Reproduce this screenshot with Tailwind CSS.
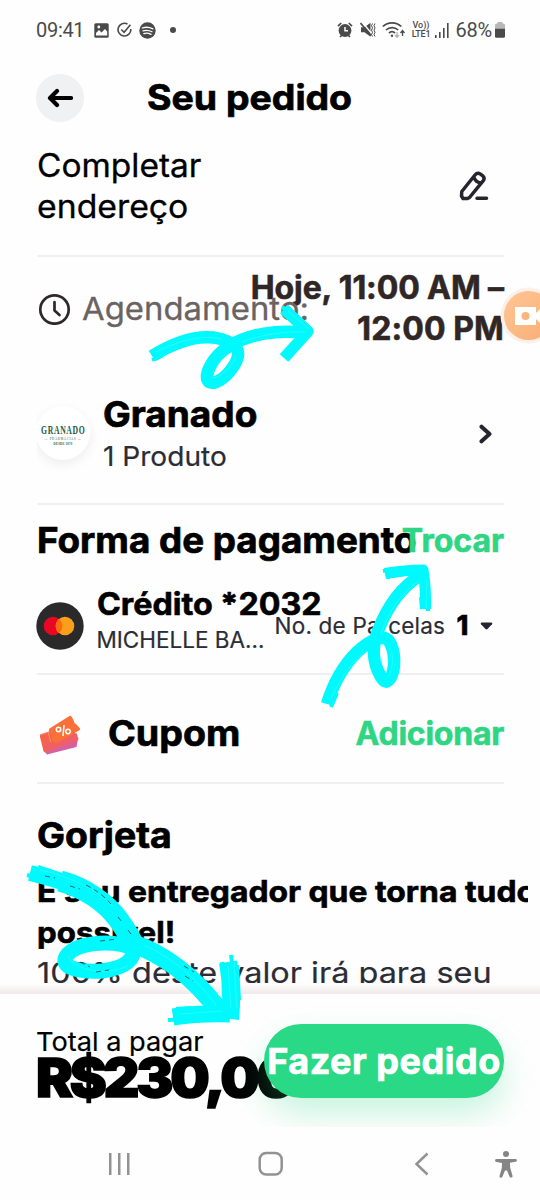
<!DOCTYPE html>
<html lang="pt-BR">
<head>
<meta charset="utf-8">
<title>Seu pedido</title>
<script src="https://cdn.jsdelivr.net/npm/@tailwindcss/browser@4"></script>
</head>
<body class="bg-white">
<div class="relative flex h-[1200px] w-[540px] flex-col overflow-hidden bg-[#fefefe] font-['Inter',sans-serif] whitespace-nowrap text-black">

  <!-- Status bar -->
  <div class="flex h-[60px] shrink-0 items-center justify-between pr-[35px] pl-[36px] font-['Roboto',sans-serif] text-[20px] text-[#4a4a4a]">
    <div class="flex items-center">
      <span class="w-[58px] tracking-[-0.3px]">09:41</span>
      <svg class="mr-[8px] h-[15px] w-[15px]" viewBox="0 0 15 15"><rect x=".3" y=".3" width="14.4" height="14.4" rx="1.5" fill="#4a4a4a"/><path d="M2 12.5V10l3-3 2.5 2.5L11 6l2.2 2.4v4.1z" fill="#fff"/><circle cx="4.8" cy="4" r="1.4" fill="#fff"/></svg>
      <svg class="mr-[7px] h-[16px] w-[15px]" viewBox="0 0 15 16" fill="none" stroke="#4a4a4a" stroke-width="1.6"><path d="M10.5 2A6.4 6.4 0 1 0 13.8 7M4.3 7.5l2.8 2.8L13.4 2.8"/></svg>
      <svg class="h-[17px] w-[17px]" viewBox="0 0 17 17"><circle cx="8.5" cy="8.5" r="8.2" fill="#4a4a4a"/><path d="M3.3 6c3.4-1.2 7.200-.8 10.600.8M4 8.900c3-1 6-.7 9 .9M4.800 11.600c2.500-.8 4.800-.5 7.200.8" fill="none" stroke="#fff" stroke-width="1.300" stroke-linecap="round"/></svg>
      <span class="ml-[14px] h-[6px] w-[6px] rounded-full bg-[#4a4a4a]"></span>
    </div>
    <div class="flex items-center">
      <svg class="mr-[7px] h-[16px] w-[16px]" viewBox="0 0 16 16"><path d="M1 4.200 4.200 1M15 4.200 11.800 1M3 15l2-2M13 15l-2-2" stroke="#4a4a4a" stroke-width="1.700"/><circle cx="8" cy="8.500" r="6.400" fill="#4a4a4a"/><path d="M8 5v3.800h3" fill="none" stroke="#fff" stroke-width="1.500"/></svg>
      <svg class="mr-[6px] h-[16px] w-[16px]" viewBox="0 0 16 16"><path d="M1 5.300h3.500L10.500.800v14L4.500 10.300H1z" fill="#4a4a4a"/><path d="M2 0 13 13" stroke="#fff" stroke-width="1.400"/><path d="M.500 1 11 13.500" stroke="#4a4a4a" stroke-width="1.600"/><path d="M12.500 1.500l-1 2.200 1 2.200-1 2.200 1 2.200-1 2.200 1 2M15 1.500l-1 2.200 1 2.200-1 2.200 1 2.200-1 2.200 1 2" fill="none" stroke="#4a4a4a" stroke-width="1"/></svg>
      <svg class="mr-[6px] h-[18px] w-[23px]" viewBox="0 0 23 18"><g fill="none" stroke="#4a4a4a" stroke-width="1.700"><path d="M.800 5.500a13.500 13.500 0 0 1 18.500 0M4 9a8.800 8.800 0 0 1 12.200 0M7 12a4.500 4.500 0 0 1 6 0"/></g><circle cx="10" cy="14.700" r="1.200" fill="#4a4a4a"/><path d="M20.500 15V10M18.500 12l2-2.500 2 2.500" stroke="#4a4a4a" stroke-width="1.300" fill="none"/><path d="M15 11v5M13 14l2 2.300 2-2.300" stroke="#b0b0b0" stroke-width="1.300" fill="none"/></svg>
      <span class="mr-[4px] flex w-[20px] flex-col items-center text-[9px] leading-[9px] font-medium"><span>Vo))</span><span class="tracking-[-0.2px]">LTE1</span></span>
      <svg class="mr-[8px] h-[15px] w-[14px]" viewBox="0 0 14 15" fill="#4a4a4a"><path d="M0 12h1.600v3H0zM4 9h1.600v6H4zM8 5h1.600v10H8zM12 0h1.600v15H12z"/></svg>
      <span class="-ml-[1.500px] w-[39.500px] tracking-[-0.300px]">68%</span>
      <svg class="h-[16px] w-[10px]" viewBox="0 0 10 16"><path d="M2.500 0h5v1.500H8.500q1.500 0 1.500 1.500v4H0V3q0-1.500 1.500-1.500h1z" fill="#b8b8b8"/><path d="M0 6.700h10v7.500q0 1.500-1.500 1.500h-7Q0 15.700 0 14.200z" fill="#4a4a4a"/></svg>
    </div>
  </div>

  <!-- Header -->
  <header class="flex h-[75px] shrink-0 items-center pl-[36px]">
    <div class="flex h-[48px] w-[48px] items-center justify-center rounded-full bg-[#f0f1f3]">
      <svg class="h-[20px] w-[26px]" viewBox="0 0 26 20" fill="none" stroke="#000" stroke-width="4.200" stroke-linecap="round" stroke-linejoin="round"><path d="M24 10H4M10 3 3 10l7 7"/></svg>
    </div>
    <h1 class="mb-[2px] ml-[62.500px] origin-left scale-x-[1.069] text-[35px] leading-[42px] font-bold [-webkit-text-stroke:0.7px]">Seu pedido</h1>
  </header>

  <!-- Scrolling order details -->
  <main class="flex h-[848px] shrink-0 flex-col overflow-hidden">
    <section class="mr-[36px] ml-[37px] flex h-[122px] shrink-0 justify-between border-b-2 border-[#f0f0f0] pt-[10px]">
      <p class="text-[32px] leading-[41px] [-webkit-text-stroke:0.3px]"><span class="block origin-left scale-x-[1.046]">Completar</span><span class="block origin-left scale-x-[1.055]">endereço</span></p>
      <svg class="mt-[25px] mr-[15px] h-[32px] w-[30px]" viewBox="0 0 30 32" fill="none" stroke="#26252f" stroke-width="3.500" stroke-linecap="round" stroke-linejoin="round"><path d="M2.800 21.500 16 5q2.500-3 5.500-.800l2 1.500q2.800 2.300.600 5.200L10.500 27.500 8.500 28.500H4L2.500 26zM15 7.500q1.500 4.500 6.500 5.500M18 28.200h9.500"/></svg>
    </section>

    <section class="mr-[36px] ml-[38px] grid h-[98px] shrink-0 pt-[10px]">
      <div class="col-start-1 row-start-1 flex h-[83px] items-center">
        <svg class="h-[33px] w-[33px]" viewBox="0 0 33 33" fill="none" stroke="#2f2829" stroke-width="2.700" stroke-linecap="round" stroke-linejoin="round"><circle cx="16.500" cy="17.500" r="14.200"/><path d="M16.500 10v8.500l5 4.500"/></svg>
        <span class="ml-[10.500px] origin-left scale-x-[1.043] text-[31.500px] leading-[41px] text-[#6b6362] [-webkit-text-stroke:0.3px]">Agendamento:</span>
      </div>
      <p class="col-start-1 row-start-1 h-[82px] text-right text-[32px] leading-[41px] font-bold text-[#2f2625] [-webkit-text-stroke:0.6px]"><span class="block tracking-[-0.100px]">Hoje, 11:00 AM –</span><span class="block tracking-[0.100px]">12:00 PM</span></p>
    </section>

    <section class="mr-[36px] ml-[37px] flex h-[150px] shrink-0 border-b-2 border-[#f0f0f0] pt-[39px]">
      <div class="flex h-[90px] w-[66px] overflow-hidden pt-[12px]">
        <div class="-ml-[1px] flex h-[54px] w-[54px] shrink-0 flex-col items-center rounded-full bg-white pt-[18px] font-['Liberation_Serif',serif] text-[#1d5a43] shadow-[0_4px_12px_rgba(0,0,0,0.07)]">
          <svg class="h-[12px] w-[46px]" viewBox="0 0 46 12"><text x="1" y="10" font-family="Liberation Serif" font-weight="700" font-size="11.500" letter-spacing="1" textLength="44.500" lengthAdjust="spacingAndGlyphs" fill="#1d5a43">GRANADO</text></svg>
          <span class="mt-[1px] text-[3px] leading-[5px] tracking-[0.700px]">— PHARMÁCIAS —</span>
          <span class="text-[3px] leading-[5px] font-bold tracking-[0.200px]">DESDE 1870</span>
        </div>
      </div>
      <div class="flex-1">
        <h2 class="origin-left scale-x-[1.028] text-[36px] leading-[41px] font-bold [-webkit-text-stroke:0.7px]">Granado</h2>
        <p class="origin-left scale-x-[1.040] text-[27px] leading-[43px] text-[#2c2c35] [-webkit-text-stroke:0.2px]">1 Produto</p>
      </div>
      <svg class="mt-[30px] mr-[11px] h-[20px] w-[15px]" viewBox="0 0 15 20" fill="none" stroke="#26252f" stroke-width="4" stroke-linecap="round" stroke-linejoin="round"><path d="M3.500 2.700 11.500 10l-8 7.300"/></svg>
    </section>

    <section class="mr-[36px] ml-[36.500px] flex h-[170px] shrink-0 flex-col border-b-2 border-[#f0f0f0] pt-[15px]">
      <div class="grid h-[41px]">
        <h2 class="col-start-1 row-start-1 origin-left scale-x-[1.022] justify-self-start text-[36px] leading-[41px] font-bold [-webkit-text-stroke:0.7px]">Forma de pagamento</h2>
        <span class="z-10 col-start-1 row-start-1 justify-self-end text-[32px] leading-[42px] font-bold text-[#2ed583] [-webkit-text-stroke:0.6px]">Trocar</span>
      </div>
      <div class="mt-[23px] grid">
        <div class="col-start-1 row-start-1 flex">
          <svg class="mt-[18px] -ml-[.5px] h-[48px] w-[48px]" viewBox="0 0 48 48"><circle cx="24" cy="24" r="23.700" fill="#2a2a2b"/><circle cx="17" cy="24" r="9.300" fill="#ea0721"/><circle cx="29" cy="24" r="9.300" fill="#f99f1b"/><path d="M23 16.900a9.300 9.300 0 0 1 0 14.200 9.300 9.300 0 0 1 0-14.200z" fill="#fb6b0d"/></svg>
          <div class="ml-[12.500px]">
            <p class="origin-left scale-x-[1.040] text-[31px] leading-[40px] font-bold [-webkit-text-stroke:0.6px]">Crédito *2032</p>
            <p class="text-[22.500px] leading-[32px] text-[#2c2c35] [-webkit-text-stroke:0.2px]">MICHELLE BA…</p>
          </div>
        </div>
        <div class="col-start-1 row-start-1 mt-[22px] mr-[11.500px] flex h-[40px] items-center justify-self-end">
          <span class="text-[22.500px] tracking-[0.200px] text-[#2c2c35] [-webkit-text-stroke:0.2px]">No. de Parcelas</span>
          <span class="ml-[11.500px] text-[27px] font-extrabold [-webkit-text-stroke:0.5px]">1</span>
          <svg class="ml-[11px] h-[8px] w-[13px]" viewBox="0 0 13 8"><path d="M1.500.500h10q1.500.500.500 1.700L7.500 7q-1 .800-2 0L1 2.200Q0 1 1.500.500z" fill="#26252f"/></svg>
        </div>
      </div>
    </section>

    <section class="mr-[36px] ml-[37px] flex h-[109px] shrink-0 items-center border-b-2 border-[#f0f0f0] pt-[9px]">
      <svg class="mt-[4px] h-[42px] w-[44px]" viewBox="0 0 44 42"><path d="m6 36 35-11-1.500 8L10 40.500z" fill="#d9609f"/><path d="M3 20.500 32 11l4 5 5.500 9.500L8.500 38q-1.500.500-2-1L5 31l-2-8z" fill="#f4644b"/><path d="m11 18 4.500 16M3 21l9-3" stroke="#ff8a72" stroke-width="1"/><path d="m6.500 31 33-12 2 6L9 37z" fill="#ef5f63"/><path d="M12.500 14.500 32.500 2q1.300-.700 2 .500l2 3.500 1 3 2 1.500 3.500 4q.500 1.500-1 2L20 29q-2 .800-3-.500L14.500 25l1-2.500-2.500-2-1-4q-.500-1.200.500-2z" fill="#fb7038"/><g fill="none" stroke="#fff" stroke-width="1.500"><circle cx="21.500" cy="15.500" r="2.200"/><circle cx="31" cy="17.500" r="2.200"/><path d="M26 22 27 11"/></g></svg>
      <h2 class="ml-[27px] flex-1 origin-left scale-x-[1.045] text-[36px] leading-[42px] font-bold [-webkit-text-stroke:0.7px]">Cupom</h2>
      <span class="mt-[2px] text-[32px] leading-[42px] font-bold tracking-[-0.250px] text-[#2ed583] [-webkit-text-stroke:0.6px]">Adicionar</span>
    </section>

    <section class="mr-[12px] ml-[36.500px] h-[200px] shrink-0 overflow-hidden pt-[31px]">
      <h2 class="origin-left scale-x-[1.053] text-[35.500px] leading-[41px] font-bold [-webkit-text-stroke:0.7px]">Gorjeta</h2>
      <p class="mt-[15px] text-[29.500px] leading-[41px] font-bold [-webkit-text-stroke:0.6px]"><span class="block origin-left scale-x-[1.080]">É seu entregador que torna tudo</span><span class="block origin-left scale-x-[1.060]">possível!</span></p>
      <p class="origin-left scale-x-[1.118] text-[29px] leading-[39px] text-[#2c2c35] [-webkit-text-stroke:0.2px]">100% deste valor irá para seu</p>
    </section>
  </main>

  <!-- Checkout footer -->
  <div class="h-[11px] shrink-0 bg-linear-to-b from-white to-[#f1e8e9]"></div>
  <footer class="grid h-[133px] shrink-0 overflow-hidden bg-[#fefefe] pr-[36px] pl-[36px]">
    <div class="col-start-1 row-start-1 pt-[31px]">
      <p class="h-[33px] origin-left scale-x-[1.045] text-[26px] leading-[34px] [-webkit-text-stroke:0.2px]">Total a pagar</p>
      <p class="origin-left scale-x-[1.030] text-[54px] leading-[40px] font-black tracking-[-3.200px] [-webkit-text-stroke:1.500px]">R$230,00</p>
    </div>
    <button class="z-10 col-start-1 row-start-1 mt-[30px] h-[74px] w-[240px] justify-self-end rounded-full bg-[#2ad986] text-[36px] leading-[74px] font-bold tracking-[0.520px] text-white shadow-[0_16px_32px_rgba(42,217,134,0.25)] [-webkit-text-stroke:0.7px]"><span class="-mx-[5px]">Fazer pedido</span></button>
  </footer>

  <!-- System navigation -->
  <nav class="flex h-[73px] shrink-0 items-center bg-[#fefefe] pl-[108px]">
    <svg class="h-[22px] w-[22px]" viewBox="0 0 22 22" fill="#929292"><path d="M1 0h2.500v22H1zM10 0h2.500v22H10zM19 0h2.500v22H19z"/></svg>
    <svg class="ml-[128px] h-[26px] w-[26px]" viewBox="0 0 26 26"><rect x="1.700" y="2" width="22" height="21.500" rx="6.500" fill="none" stroke="#929292" stroke-width="2.500"/></svg>
    <svg class="ml-[130px] h-[24px] w-[16px]" viewBox="0 0 16 24" fill="none" stroke="#929292" stroke-width="2.500"><path d="M13.500 1.500 2.500 12l11 10.500"/></svg>
    <svg class="ml-[65px] h-[28px] w-[22px]" viewBox="0 0 22 28" fill="#858585"><circle cx="11" cy="4" r="3"/><path d="M1.500 9h19a1.400 1.400 0 0 1 0 2.800l-5.500 1 .200 5 2.300 8q.200 1.800-1.200 1.800t-1.800-1.200L12 20.500h-2l-2.500 6q-.500 1.200-1.800 1.200t-1.200-1.800l2.300-8 .200-5-5.500-1A1.400 1.400 0 0 1 1.500 9z"/></svg>
  </nav>

  <!-- Screen recorder bubble -->
  <svg class="absolute top-[285px] left-[498px] z-20 h-[62px] w-[42px]" viewBox="0 0 42 62"><defs><linearGradient id="bubble" x1="0" y1="0" x2="1" y2="1"><stop offset="0" stop-color="#ffc794"/><stop offset="1" stop-color="#f9ad76"/></linearGradient></defs><circle cx="30.500" cy="30.500" r="28" fill="#fdf0e9"/><circle cx="30.500" cy="30.500" r="24.500" fill="url(#bubble)"/><path d="M17 22h21v6l4-4v14l-4-4v6H17z" fill="#fff"/><circle cx="27.500" cy="31" r="4" fill="#fab57c"/></svg>

  <!-- Hand-drawn brush arrows -->
  <svg class="pointer-events-none absolute top-0 left-0 z-20 h-[1200px] w-[540px]" viewBox="0 0 540 1200" fill="none" stroke-linejoin="round">
    <g stroke="#00f9fd">
      <g stroke-width="12.500">
        <path d="M152 356C175 342 199 334 219 338.500C240 344 242 354 233 367C225 379 214 385 209 382C203 376 212 357 228 347C248 334 278 329 306 333"/>
        <path stroke-width="11.500" d="M284 309 308 331.500 284 358"/>
      </g>
      <g stroke-width="12.500">
        <path d="M327 704C334 681 344 665 357 652C370 640 384 634 389 641C395 650 396 668 390.500 678C387 683 385 683 381 677C373 663 371 649 378 631C387 607 401 587 421 575"/>
        <path stroke-width="11" d="M385 573.500 Q405 570 423 570 Q426 587 425.500 609"/>
      </g>
      <path stroke-width="16" d="M30 873C55 879 73 885 90 893"/>
      <path stroke-width="21" d="M60 881C86 888 106 903 118 919C126 930 132 940 136 950"/>
      <path stroke-width="19" d="M131 943C162 953 194 976 220 1012"/>
      <path stroke-width="17" d="M173 1017Q200 1013 230 1014"/>
      <path stroke-width="18" d="M230 1019Q233 990 228 962"/>
      <path stroke-width="15" d="M135 949C111 938 70 943 65 959C63 970 86 972 102 971C125 968 136 960 134 944"/>
      <path stroke-width="4" d="m152 353 12-6M152 360l10-4M282 307l10 7M325 702l6-14M331 707l6-14M383 571l20-3M386 577l18-3M422 609l-1-12M428 611v-13M38 867l24 8M27 875l24 7M176 1009l15-1M168 1020l22-1M222 962l3 20M231 955l4 28M237 965l2 35"/>
    </g>
    <g stroke="#8dffff" stroke-width=".7" stroke-opacity=".4">
      <path d="M156 352C178 341 202 334 222 339M212 377C216 380 230 371 236 356M242 342C260 335 284 331 305 332M288 311 309 329"/>
      <path d="M331 699C339 681 349 666 362 654M391 650C394 661 392 670 389 676M381 634C389 611 401 593 419 581M427 580l-1 28"/>
      <path d="M40 870C70 876 95 889 114 907M68 956C76 971 106 976 128 966M145 946C170 956 195 977 216 1005M180 1014 222 1011M228 966 231 1008M234 962 237 1008"/>
    </g>
    <g stroke="#123a42" stroke-width="1" stroke-dasharray="5 4" stroke-opacity=".75">
      <path d="M86 885C96 890 104 896 111 904M45 876l10 2M70 886l10 3M118 917l4 5M128 930l5 7M80 962l10 5M100 941l18-2M184 966l10 6M185 976l8 5M96 972l13-2"/>
    </g>
  </svg>
</div>
</body>
</html>
